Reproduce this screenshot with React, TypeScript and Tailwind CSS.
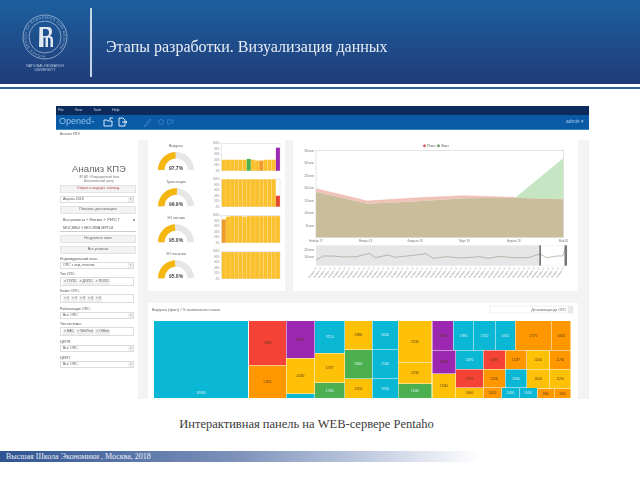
import React from 'react';

const C = '#0ab8d6';
const R = '#f44336';
const O = '#ff9800';
const P = '#9c27b0';
const Y = '#ffc107';
const G = '#4caf50';
const BAR = '#fbc02d';

// x, y, w, h in page pixels
const treemap: [number, number, number, number, string, string][] = [
  [154, 321, 94, 77, C, '119580'],
  [249, 321, 37, 44, R, '74980'],
  [249, 365.5, 37, 32.5, O, '57420'],
  [286.5, 321, 28, 37, P, '44170'],
  [286.5, 358.5, 28, 35, Y, '42080'],
  [286.5, 394, 28, 4, C, ''],
  [315, 321, 29.5, 32, C, '37110'],
  [315, 353.5, 29.5, 29, Y, '32787'],
  [315, 383, 29.5, 15, G, '27340'],
  [345, 321, 27, 28.5, Y, '29880'],
  [345, 350, 27, 28.5, G, '29660'],
  [345, 379, 27, 19, Y, '19310'],
  [372.5, 321, 25.5, 28.5, C, '26220'],
  [372.5, 350, 25.5, 28.5, C, '25160'],
  [372.5, 379, 25.5, 19, C, '18700'],
  [398.5, 321, 33, 41.5, Y, '37240'],
  [398.5, 363, 33, 20.5, Y, '20740'],
  [398.5, 384, 33, 14, G, '18140'],
  [432.5, 321, 20.5, 29, P, '19810'],
  [432.5, 350.5, 23, 23, P, '15310'],
  [432.5, 374, 23, 24, Y, '15940'],
  [453.5, 321, 20, 29, C, '17390'],
  [474, 321, 21, 29, C, '17250'],
  [495.5, 321, 19.5, 29, C, '17010'],
  [515.5, 321, 36, 29, O, '27270'],
  [552, 321, 18.5, 29, O, '16820'],
  [456, 350.5, 27, 18.5, C, '14970'],
  [483.5, 350.5, 21.5, 18.5, R, '12870'],
  [505.5, 350.5, 21, 18.5, O, '12187'],
  [527, 350.5, 22.5, 18.5, Y, '12040'],
  [550, 350.5, 20.5, 18.5, O, '11780'],
  [456, 369.5, 27, 18, R, '12710'],
  [483.5, 369.5, 21.5, 18, O, '12130'],
  [505.5, 369.5, 21, 18, C, '11940'],
  [527, 369.5, 22.5, 19, Y, '11640'],
  [550, 369.5, 20.5, 19, Y, '11210'],
  [456, 388, 27, 10, Y, '10960'],
  [483.5, 388, 18, 10, O, '10410'],
  [502, 388, 17, 10, C, '10260'],
  [519.5, 388, 17.5, 10, C, '10130'],
  [537.5, 389, 16.5, 9, O, '9960'],
  [554.5, 389, 16, 9, O, '9810'],
];

const gauges = [
  { title: 'Выручка', value: '97.7%', base: 170, end: 0.49 },
  { title: 'Трансляция', value: '99.9%', base: 206.3, end: 0.52 },
  { title: 'ЭО письма', value: '95.0%', base: 242.3, end: 0.48 },
  { title: 'ЭО посылки', value: '95.0%', base: 278.3, end: 0.48 },
];

const arc = (cx: number, cy: number, from: number, to: number) => {
  const a0 = Math.PI * (1 - from);
  const a1 = Math.PI * (1 - to);
  const x = (r: number, a: number) => (cx + r * Math.cos(a)).toFixed(2);
  const y = (r: number, a: number) => (cy - r * Math.sin(a)).toFixed(2);
  return `M${x(18, a0)} ${y(18, a0)}A18 18 0 0 1 ${x(18, a1)} ${y(18, a1)}L${x(11.5, a1)} ${y(11.5, a1)}A11.5 11.5 0 0 0 ${x(11.5, a0)} ${y(11.5, a0)}Z`;
};

const bars: { top: number; bottom: number; list: [number, string][] }[] = [
  {
    top: 143.3,
    bottom: 170.7,
    list: [
      [0.4, BAR], [0.4, BAR], [0.4, BAR], [0.4, BAR], [0.4, BAR], [0.4, BAR],
      [0.43, G], [0.4, BAR], [0.37, BAR], [0.37, '#f09a28'], [0.4, BAR], [0.4, BAR], [0.4, BAR], [0.84, P],
    ],
  },
  {
    top: 179.3,
    bottom: 206.7,
    list: [
      [1, BAR], [1, BAR], [1, BAR], [1, BAR], [1, BAR], [1, BAR], [1, BAR],
      [1, BAR], [1, BAR], [1, BAR], [1, BAR], [1, BAR], [1, BAR], [0.4, '#e4472e'],
    ],
  },
  {
    top: 215.3,
    bottom: 242.7,
    list: [
      [0.85, '#f09a28'], [0.95, BAR], [0.97, BAR], [0.97, BAR], [0.97, BAR], [0.95, BAR], [0.97, BAR],
      [0.97, BAR], [0.97, BAR], [0.97, BAR], [0.97, BAR], [0.97, BAR], [0.97, BAR], [0.97, BAR],
    ],
  },
  {
    top: 251.3,
    bottom: 278.7,
    list: Array.from({ length: 14 }, () => [0.97, BAR] as [number, string]),
  },
];

const Label = ({ children, className = '' }: { children: React.ReactNode; className?: string }) => (
  <div className={`text-[3.5px] leading-[5px] text-[#555] ${className}`}>{children}</div>
);

const Sel = ({ children, className = '' }: { children: React.ReactNode; className?: string }) => (
  <div className={`flex h-[7px] w-[74px] items-center justify-between border border-[#ddd] bg-white pl-[2px] text-[3.5px] text-[#555] ${className}`}>
    <span>{children}</span>
    <span className="flex h-full w-[5px] items-center justify-center bg-[#eee] text-[3px] text-[#999]">▾</span>
  </div>
);

const Btn = ({ children, className = '' }: { children: React.ReactNode; className?: string }) => (
  <div className={`flex h-[8px] w-[76px] items-center justify-center border border-[#e4e4e4] bg-[#f3f3f3] text-[3.5px] text-[#666] ${className}`}>
    {children}
  </div>
);

const Tags = ({ items, className = '' }: { items: string[]; className?: string }) => (
  <div className={`flex h-[9px] w-[74px] items-center gap-[1px] border border-[#ddd] bg-white pl-[2px] ${className}`}>
    {items.map((t) => (
      <span key={t} className="flex h-[6px] items-center bg-[#eee] px-[1px] text-[3.5px] whitespace-nowrap text-[#666]">
        × {t}
      </span>
    ))}
  </div>
);

const Logo = () => (
  <svg width="90" height="84" viewBox="0 0 90 84" className="block shrink-0 blur-[0.3px]">
    <defs>
      <path id="ring" d="M45 55.500a18.500 18.500 0 1 1 0.010 0" />
    </defs>
    <circle cx="45" cy="37" r="22" fill="none" stroke="#b9c9de" strokeWidth="0.700" />
    <circle cx="45" cy="37" r="16" fill="none" stroke="#b9c9de" strokeWidth="0.700" />
    <text fontSize="3.200" fill="#b9c9de" fontFamily="Liberation Sans, sans-serif" letterSpacing="0.600">
      <textPath href="#ring">HIGHER SCHOOL OF ECONOMICS 1992 MOSCOW</textPath>
    </text>
    <path
      d="M39.500 27h8.500q4 0 4 4.500q0 3.500-2.500 4.300q3.500 0.400 3.500 4.200v7h-2.500v-7q0-2.500-2.500-2.500v9.500h-2.500v-9.500h-2v9.500h-4.500zM43 29v7h3q3 0 3-3.500t-3-3.500z"
      fill="#dfe7f1"
      fillRule="evenodd"
    />
    <text x="45" y="66.500" textAnchor="middle" fontSize="3.500" fill="#b9c9de" fontFamily="Liberation Sans, sans-serif">
      NATIONAL RESEARCH
    </text>
    <text x="45" y="71" textAnchor="middle" fontSize="3.500" fill="#b9c9de" fontFamily="Liberation Sans, sans-serif">
      UNIVERSITY
    </text>
  </svg>
);

const Sidebar = () => (
  <div className="flex h-full w-[82px] shrink-0 flex-col items-start bg-white pl-[4px]">
    <div className="mt-[23px] h-[12px] w-[78px] text-center text-[9.500px] leading-[12px] text-[#666]">Анализ КПЭ</div>
    <div className="w-[78px] text-center text-[3px] leading-[4px] text-[#777]">
      <div>ФЛ АО «Операционный блок</div>
      <div>Аналитический центр</div>
    </div>
    <Btn className="mt-[2px] border-[#c98a8a] text-[#b5474f]">Открыть сводную таблицу</Btn>
    <Sel className="mt-[3px]">Апрель 2018</Sel>
    <Btn className="mt-[3px]">Показать детализацию</Btn>
    <div className="mt-[3px] h-[15px] w-[76px] border-b border-[#ccc] pl-[3px] text-[3.800px] leading-[7.500px] text-[#555]">
      <div className="flex justify-between pr-[1px]">
        <span>Все регионы » Москва » УФПС Г</span>
        <span>●</span>
      </div>
      <div>МОСКВЫ » МОСКВА МРП-8</div>
    </div>
    <Btn className="mt-[3px]">На уровень ниже</Btn>
    <Btn className="mt-[3px]">Все регионы</Btn>
    <Label className="mt-[3px]">Индивидуальный план:</Label>
    <Sel>ОПС с инд. планом</Sel>
    <Label className="mt-[3px]">Тип ОПС:</Label>
    <Tags items={['ГОПС', 'ДОПС', 'ПОПС']} />
    <Label className="mt-[3px]">Кювет ОПС:</Label>
    <Tags items={['1', '2', '3', '4', '5']} />
    <Label className="mt-[4px]">Работающие ОПС:</Label>
    <Sel>Все ОПС</Sel>
    <Label className="mt-[3px]">Тип системы:</Label>
    <Tags items={['ЕАС', 'WinPost', 'Offline']} />
    <Label className="mt-[4px]">ЦФПП:</Label>
    <Sel>Все ОПС</Sel>
    <Label className="mt-[4px]">ЦФКП:</Label>
    <Sel>Все ОПС</Sel>
  </div>
);

const GaugeCard = () => (
  <svg width="137" height="151" viewBox="148 140 137 151" className="block shrink-0 bg-white" fontFamily="Liberation Sans, sans-serif">
    {gauges.map((g) => (
      <g key={g.title}>
        <text x="176" y={g.base - 23.300} textAnchor="middle" fontSize="3.500" fill="#666">{g.title}</text>
        <path d={arc(176, g.base, 0, 1)} fill="#e6e6e6" />
        <path d={arc(176, g.base, 0, g.end)} fill="#f5b70f" />
        <text x="176" y={g.base - 0.5} textAnchor="middle" fontSize="5" fontWeight="700" fill="#444">{g.value}</text>
      </g>
    ))}
    {bars.map((chart, i) => {
      const h = chart.bottom - chart.top;
      return (
        <g key={i}>
          <rect x="221.700" y={chart.top} width="58.300" height={h} fill="#fff" stroke="#cfcfcf" strokeWidth="0.500" />
          {[0, 1, 2, 3, 4, 5].map((t) => (
            <text key={t} x="219.500" y={chart.bottom - (t * h) / 5 + 1} textAnchor="end" fontSize="2.600" fill="#888">{t * 20}%</text>
          ))}
          {chart.list.map(([v, fill], n) => (
            <rect key={n} x={221.700 + n * 4.160 + 0.1} y={chart.bottom - v * h} width="4" height={v * h} fill={fill} />
          ))}
        </g>
      );
    })}
  </svg>
);

// zoom coordinates of the area chart, converted to page pixels
const px = (x: number) => 280 + x / 3;
const py = (y: number) => 100 + y / 3;
const pts = (list: [number, number][]) => list.map(([x, y]) => `${px(x).toFixed(1)},${py(y).toFixed(1)}`).join(' ');

const months = ['Ноябрь 17', 'Январь 18', 'Февраль 18', 'Март 18', 'Апрель 18', 'Май 18'];

const AreaCard = () => (
  <svg width="285" height="151" viewBox="293 140 285 151" className="block shrink-0 bg-white" fontFamily="Liberation Sans, sans-serif">
    <circle cx="424.500" cy="145.700" r="1.500" fill="#d9606a" />
    <text x="427" y="147" fontSize="3.500" fill="#555">План</text>
    <circle cx="438.500" cy="145.700" r="1.500" fill="#6fa56f" />
    <text x="441" y="147" fontSize="3.500" fill="#555">Факт</text>
    <rect x="316" y="150.300" width="247.300" height="87" fill="#fff" stroke="#c8c8c8" strokeWidth="0.500" />
    {['350 млн', '300 млн', '250 млн', '200 млн', '150 млн', '100 млн', '50 млн'].map((t, i) => (
      <text key={t} x="314" y={151.500 + i * 12.500} textAnchor="end" fontSize="2.600" fill="#777">{t}</text>
    ))}
    <polygon points={pts([[705, 293], [850, 175], [850, 298]])} fill="#c6e5c3" />
    <polygon points={pts([[108, 266], [262, 303], [415, 293], [550, 287], [705, 292], [705, 293], [550, 295], [415, 304], [262, 311], [108, 275]])} fill="#f0c2b8" />
    <polygon points={pts([[108, 275], [262, 311], [415, 304], [550, 295], [705, 293], [850, 298], [850, 412], [108, 412]])} fill="#c9bd9c" />
    <polyline points={pts([[108, 266], [262, 303], [415, 293], [550, 287], [705, 292]])} fill="none" stroke="#e8a79c" strokeWidth="0.400" />
    {months.map((m, i) => (
      <text key={m} x={px(108 + i * 148.500)} y="242" textAnchor="middle" fontSize="2.800" fill="#777">{m}</text>
    ))}
    <rect x="316" y="245.300" width="224" height="20.400" fill="#e6e6e6" />
    <rect x="540" y="245.300" width="27" height="20.400" fill="#fff" stroke="#ddd" strokeWidth="0.300" />
    <text x="314" y="250.500" textAnchor="end" fontSize="2.600" fill="#777">200 млн</text>
    <text x="314" y="258" textAnchor="end" fontSize="2.600" fill="#777">100 млн</text>
    <polyline
      points={pts([[108, 480], [130, 468], [160, 468], [190, 471], [230, 470], [268, 460], [285, 473], [325, 465], [345, 472], [400, 466], [437, 461], [460, 475], [500, 470], [540, 474], [600, 470], [625, 475], [660, 469], [700, 473], [745, 473], [780, 462], [800, 473], [830, 468], [848, 468], [858, 440]])}
      fill="none"
      stroke="#8b9a82"
      strokeWidth="0.600"
    />
    <rect x="539.500" y="245.300" width="1.300" height="20.400" fill="#555" />
    <rect x="564.500" y="245.300" width="2.500" height="20.400" fill="#777" />
    {Array.from({ length: 52 }, (_, i) => (
      <text
        key={i}
        x={317 + i * 4.850}
        y="268"
        fontSize="2.600"
        fill="#888"
        textAnchor="end"
        transform={`rotate(-55 ${317 + i * 4.850} 268)`}
      >
        Январь 17
      </text>
    ))}
  </svg>
);

const TreemapCard = () => (
  <div className="flex h-[96px] w-[430px] flex-col bg-white">
    <svg width="430" height="96" viewBox="148 303 430 96" className="block" fontFamily="Liberation Sans, sans-serif">
      <text x="152" y="311" fontSize="3.800" fill="#666">Выручка (факт) / % выполнения плана</text>
      <rect x="490" y="306" width="83" height="7" fill="#fff" stroke="#ddd" strokeWidth="0.500" />
      <rect x="568" y="306" width="5" height="7" fill="#e8e8e8" />
      <text x="566" y="310.800" textAnchor="end" fontSize="3.500" fill="#666">Детализация до ОПС</text>
      {treemap.map(([x, y, w, h, fill, label], i) => (
        <g key={i}>
          <rect x={x} y={y} width={w} height={h} fill={fill} />
          {label && (
            <text
              x={x + w / 2}
              y={i === 0 ? y + h - 4 : y + h / 2 + 1}
              textAnchor="middle"
              fontSize="2.800"
              fill={fill === C || fill === G ? '#d8f3f7' : '#5a3a10'}
            >
              {label}
            </text>
          )}
        </g>
      ))}
    </svg>
  </div>
);

const Dashboard = () => (
  <div className="mt-[17px] ml-[56px] flex h-[293px] w-[533px] flex-col overflow-hidden bg-white font-['Liberation_Sans',sans-serif] blur-[0.45px]">
    <div className="flex h-[9px] items-center gap-[11px] bg-[#0c2a5c] pl-[2px] text-[3.500px] text-[#cfd8e6]">
      <span>File</span>
      <span>View</span>
      <span>Tools</span>
      <span>Help</span>
    </div>
    <div className="flex h-[15px] items-center justify-between border-b border-[#3c86c6] bg-[#0a5aa6] pr-[5px] pl-[3px]">
      <div className="flex items-center">
        <span className="w-[33px] text-[9px] text-[#8fc1ea]">Opened</span>
        <span className="text-[4px] text-[#8fc1ea]">▾</span>
        <svg width="30" height="10" viewBox="0 0 30 10" className="ml-[9px]" fill="none" stroke="#dbe9f6" strokeWidth="1">
          <path d="M1 3h3l1 1h4v5H1z" />
          <path d="M7 3V1h3" />
          <path d="M16 1h4l2 2v6h-6z" />
          <path d="M19 5h5l-1-1m1 1-1 1" />
        </svg>
        <svg width="36" height="10" viewBox="0 0 36 10" className="ml-[10px]" fill="none" stroke="#2f7ec0" strokeWidth="1">
          <path d="M1 9l6-7 1 1-6 7z" />
          <circle cx="18" cy="5" r="2.500" />
          <path d="M24 3h6v3h-3l-2 2z" />
        </svg>
      </div>
      <span className="text-[5px] text-[#a9cdec]">admin ▾</span>
    </div>
    <div className="flex h-[10px] shrink-0 items-center pl-[4px] text-[3.500px] text-[#666]">Анализ КПЭ</div>
    <div className="flex min-h-0 flex-1 bg-[#f3f3f3]">
      <Sidebar />
      <div className="ml-[10px] flex w-[430px] flex-col">
        <div className="flex h-[151px] gap-[8px]">
          <GaugeCard />
          <AreaCard />
        </div>
        <div className="h-[12px]" />
        <TreemapCard />
      </div>
    </div>
  </div>
);

export default function App() {
  return (
    <div className="flex h-[480px] w-[640px] flex-col overflow-hidden bg-white font-['Liberation_Serif',serif]">
      <header className="flex h-[84px] shrink-0 bg-gradient-to-b from-[#1b5f9f] to-[#1f3c78]">
        <Logo />
        <div className="mt-[8px] h-[69px] w-[2px] shrink-0 bg-[#c5d3e6]" />
        <h1 className="mt-[37px] ml-[14px] text-[16px] leading-[20px] font-normal text-[#e8eef6] blur-[0.3px]">
          Этапы разработки. Визуализация данных
        </h1>
      </header>
      <div className="mt-[3px] h-[2px] shrink-0 bg-[#2f5d9c]" />
      <Dashboard />
      <p className="mt-[16px] h-[18px] pr-[27px] text-center text-[12.500px] leading-[18px] text-[#3a3a3a]">
        Интерактивная панель на WEB-сервере Pentaho
      </p>
      <footer className="mt-[18px] flex h-[11px] w-[480px] shrink-0 items-center bg-gradient-to-r from-[#2f5391] via-[#7f93bb] to-white pl-[6px] text-[8px] text-[#e8eef6]">
        Высшая Школа Экономики , Москва, 2018
      </footer>
    </div>
  );
}
